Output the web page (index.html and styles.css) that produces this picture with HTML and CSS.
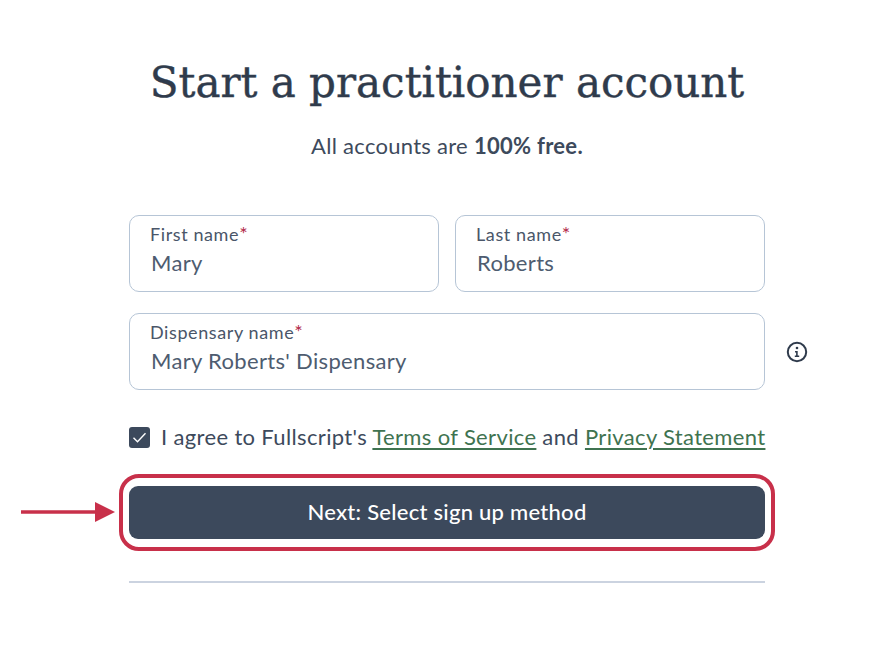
FILE: index.html
```
<!DOCTYPE html>
<html lang="en">
<head>
<meta charset="utf-8">
<title>Start a practitioner account</title>
<link rel="stylesheet" href="styles.css">
</head>
<body>
<main class="page">
  <h1 class="title">Start a practitioner account</h1>
  <p class="subtitle">All accounts are <strong>100% free.</strong></p>
  <form class="form">
    <div class="row">
      <div class="field">
        <span class="label">First name<em>*</em></span>
        <span class="value">Mary</span>
      </div>
      <div class="field">
        <span class="label">Last name<em>*</em></span>
        <span class="value">Roberts</span>
      </div>
    </div>
    <div class="row row-info">
      <div class="field">
        <span class="label">Dispensary name<em>*</em></span>
        <span class="value">Mary Roberts' Dispensary</span>
      </div>
      <svg class="info" viewBox="0 0 22 22" width="22" height="22" aria-hidden="true">
        <circle cx="11" cy="11" r="9.2" fill="none" stroke="#2f3b4c" stroke-width="2"/>
        <circle cx="11" cy="7" r="1.3" fill="#2f3b4c"/>
        <path d="M9 10h2.7v4.6H13.2v1.4H8.8v-1.4h1.3v-3.2H9z" fill="#2f3b4c"/>
      </svg>
    </div>
    <div class="agree">
      <span class="check">
        <svg viewBox="0 0 21 21" width="21" height="21" aria-hidden="true"><path d="M4.5 10.8l4 4 8-8.5" fill="none" stroke="#fff" stroke-width="1.4"/></svg>
      </span>
      <span>I agree to Fullscript's <a href="#">Terms of Service</a> and <a href="#">Privacy Statement</a></span>
    </div>
    <div class="submit">
      <button type="button" class="next">Next: Select sign up method</button>
      <span class="ring"></span>
      <svg class="arrow" viewBox="0 0 94 20" width="94" height="20" aria-hidden="true">
        <path d="M0 8.2h75v3.6H0z" fill="#c8304a"/>
        <path d="M74 0l20 10-20 10z" fill="#c8304a"/>
      </svg>
    </div>
    <hr class="divider">
  </form>
</main>
</body>
</html>
```
FILE: styles.css
```
* { box-sizing: border-box; }
html, body { margin: 0; background: #fff; }
body {
  font-family: "Lato", "Liberation Sans", sans-serif;
  color: #3d4a5c;
}
.page {
  width: 882px;
  height: 666px;
  overflow: hidden;
  padding: 54px 117px 0 129px;
}
.title {
  margin: 0 0 0 -10px;
  width: 656px;
  font-family: "DejaVu Serif", "Liberation Serif", serif;
  font-weight: 400;
  font-size: 42px;
  line-height: 58px;
  color: #2f3b4c;
  -webkit-text-stroke: 0.4px #2f3b4c;
  text-align: center;
  white-space: nowrap;
}
.subtitle {
  margin: 19px 0 0;
  font-size: 22px;
  letter-spacing: 0.28px;
  line-height: 30px;
  text-align: center;
  color: #3d4a5c;
}
.subtitle strong { font-weight: 700; }
.form { margin-top: 54px; }
.row { display: flex; gap: 16px; margin-bottom: 21px; }
.row-info { position: relative; margin-bottom: 32px; }
.field {
  flex: 1;
  height: 77px;
  border: 1px solid #b6c5d6;
  border-radius: 10px;
  padding: 7px 20px 0;
  display: flex;
  flex-direction: column;
}
.label { font-size: 18px; letter-spacing: 0.6px; line-height: 22px; color: #4a5669; }
.label em { font-style: normal; font-size: 20px; line-height: 16px; color: #b3294a; }
.value { font-size: 22px; letter-spacing: 0.33px; line-height: 30px; margin: 3px 0 0 1px; color: #4e5c70; }
.info { position: absolute; left: 657px; top: 28px; }
.agree {
  display: flex;
  align-items: center;
  gap: 11px;
  font-size: 22px;
  letter-spacing: 0.35px;
  line-height: 30px;
  color: #3d4a5c;
  white-space: nowrap;
}
.agree a {
  color: #3f7350;
  text-decoration: underline;
  text-decoration-thickness: 2px;
  text-underline-offset: 3px;
}
.check {
  width: 21px;
  height: 21px;
  border-radius: 3px;
  background: #3c495c;
  display: block;
  flex: none;
}
.check svg { display: block; }
.submit { position: relative; margin-top: 34px; height: 53px; }
.next {
  display: block;
  width: 100%;
  height: 53px;
  padding: 0 0 2px;
  border: 0;
  border-radius: 9px;
  background: #3c495c;
  color: #fff;
  font-family: inherit;
  font-size: 22px;
  letter-spacing: 0.26px;
  font-weight: 500;
}
.ring {
  position: absolute;
  inset: -12px -10px -12px -10px;
  border: 4px solid #c8304a;
  border-radius: 20px;
}
.arrow { position: absolute; left: -108px; top: 16px; }
.divider {
  margin: 42px 0 0;
  border: 0;
  height: 2px;
  background: #cbd3e0;
}
```
